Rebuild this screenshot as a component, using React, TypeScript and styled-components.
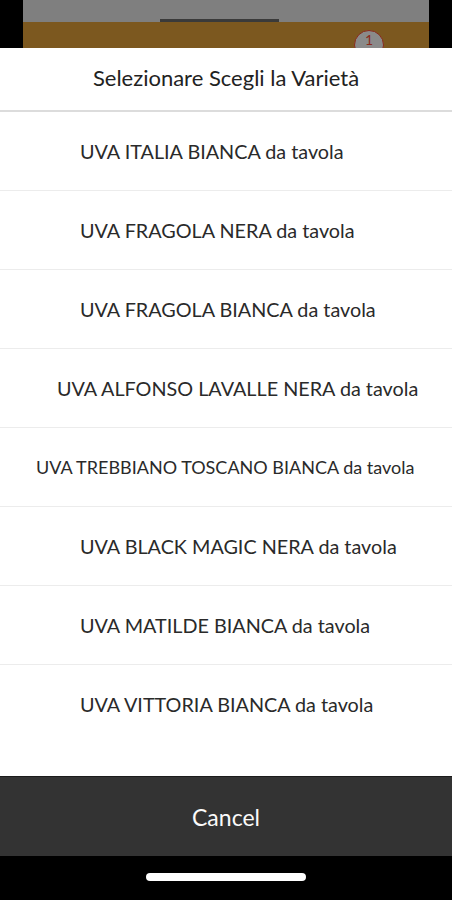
import React from "react";
import styled, { createGlobalStyle } from "styled-components";

const GlobalStyle = createGlobalStyle`
  html, body { margin: 0; padding: 0; background: #000; }
  * { box-sizing: border-box; }
`;

const Screen = styled.div`
  width: 452px;
  height: 900px;
  display: flex;
  flex-direction: column;
  background: #000;
  font-family: Lato, "Open Sans", sans-serif;
  overflow: hidden;
`;

const Backdrop = styled.div`
  height: 48px;
  padding: 0 23px;
  background: #000;
  display: flex;
`;

const AppPeek = styled.div`
  flex: 1;
  display: flex;
  flex-direction: column;
`;

const PeekTop = styled.div`
  height: 22px;
  background: #7f7f7f;
  display: flex;
  align-items: flex-end;
  justify-content: flex-start;
  padding-left: 137px;
`;

const PeekBar = styled.div`
  width: 119px;
  height: 3px;
  background: #3a3a3a;
`;

const PeekHeader = styled.div`
  flex: 1;
  background: #7c581f;
  position: relative;
  overflow: hidden;
`;

const PeekBadge = styled.div`
  position: absolute;
  left: 331px;
  top: 8px;
  width: 30px;
  height: 30px;
  border-radius: 50%;
  border: 1.5px solid #8a2a1c;
  background: #8a8a8a;
  color: #8a2a1c;
  font-size: 14px;
  line-height: 1;
  display: flex;
  justify-content: center;
  padding-top: 2px;
`;

const Sheet = styled.div`
  flex: 1;
  background: #fff;
  display: flex;
  flex-direction: column;
`;

const Title = styled.div`
  height: 64px;
  border-bottom: 2px solid #dcdcdc;
  display: flex;
  align-items: center;
  justify-content: center;
  font-size: 22px;
  color: #222;
  padding-bottom: 3px;
`;

const List = styled.div`
  flex: 1;
  display: flex;
  flex-direction: column;
`;

const Row = styled.div<{ $indent: number; $size?: number; $last?: boolean }>`
  height: ${(p) => (p.$last ? 78 : 79)}px;
  border-bottom: ${(p) => (p.$last ? "none" : "1px solid #ececec")};
  display: flex;
  align-items: center;
  padding-left: ${(p) => p.$indent}px;
  padding-bottom: 1px;
  font-size: ${(p) => p.$size ?? 19.8}px;
  color: #2a2a2a;
  white-space: nowrap;
`;

const CancelBar = styled.div`
  height: 80px;
  background: #333;
  border-top: 1px solid #1c1c1c;
  display: flex;
  align-items: center;
  justify-content: center;
  color: #fafafa;
  font-size: 23px;
`;

const NavArea = styled.div`
  height: 44px;
  background: #000;
  display: flex;
  align-items: center;
  justify-content: center;
  padding-bottom: 2px;
`;

const HomeIndicator = styled.div`
  width: 160px;
  height: 8px;
  border-radius: 4px;
  background: #fff;
`;

const items: { label: string; indent: number; size?: number }[] = [
  { label: "UVA ITALIA BIANCA da tavola", indent: 80 },
  { label: "UVA FRAGOLA NERA da tavola", indent: 80 },
  { label: "UVA FRAGOLA BIANCA da tavola", indent: 80 },
  { label: "UVA ALFONSO LAVALLE NERA da tavola", indent: 57 },
  { label: "UVA TREBBIANO TOSCANO BIANCA da tavola", indent: 36, size: 18 },
  { label: "UVA BLACK MAGIC NERA da tavola", indent: 80 },
  { label: "UVA MATILDE BIANCA da tavola", indent: 80 },
  { label: "UVA VITTORIA BIANCA da tavola", indent: 80 },
];

export default function App() {
  return (
    <>
      <GlobalStyle />
      <Screen>
        <Backdrop>
          <AppPeek>
            <PeekTop>
              <PeekBar />
            </PeekTop>
            <PeekHeader>
              <PeekBadge>1</PeekBadge>
            </PeekHeader>
          </AppPeek>
        </Backdrop>
        <Sheet>
          <Title>Selezionare Scegli la Varietà</Title>
          <List>
            {items.map((it, i) => (
              <Row
                key={it.label}
                $indent={it.indent}
                $size={it.size}
                $last={i === items.length - 1}
              >
                {it.label}
              </Row>
            ))}
          </List>
        </Sheet>
        <CancelBar>Cancel</CancelBar>
        <NavArea>
          <HomeIndicator />
        </NavArea>
      </Screen>
    </>
  );
}
